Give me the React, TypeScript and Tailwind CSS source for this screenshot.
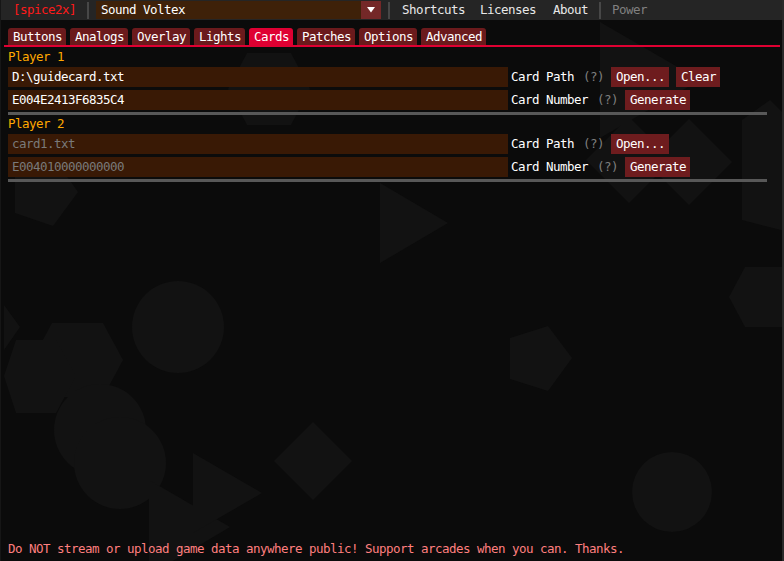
import React from "react";

const tabs = ["Buttons", "Analogs", "Overlay", "Lights", "Cards", "Patches", "Options", "Advanced"];
const tabW: Record<string, string> = {
  Buttons: "w-[58px]",
  Analogs: "w-[58px]",
  Overlay: "w-[58px]",
  Lights: "w-[51px]",
  Cards: "w-[44px]",
  Patches: "w-[58px]",
  Options: "w-[58px]",
  Advanced: "w-[65px]",
};

function Backdrop() {
  const c = "#121212";
  return (
    <svg className="absolute inset-0" width="784" height="561" viewBox="0 0 784 561">
      <polygon fill={c} points="228,89 247,53 291,53 310,89 291,125 247,125" />
      <polygon fill={c} points="600,22 700,80 600,138" />
      <polygon fill={c} points="629,117 672,160 629,203 586,160" />
      <polygon fill={c} points="689,119 732,162 689,205 646,162" />
      <polygon fill={c} points="742,120 770,100 800,130 800,235 742,220" />
      <polygon fill={c} points="15,213 53,226 78,192 55,160 15,172" />
      <polygon fill={c} points="380,183 448,223 380,263" />
      <circle fill={c} cx="178" cy="327" r="46" />
      <polygon fill={c} points="4,305 20,327 4,350" />
      <polygon fill={c} points="52,323 103,323 123,360 103,397 52,397 32,360" />
      <polygon fill={c} points="16,340 56,340 76,376 56,413 16,413 4,376" />
      <circle fill={c} cx="100" cy="430" r="46" />
      <circle fill={c} cx="120" cy="463" r="46" />
      <polygon fill={c} points="149,480 230,527 149,575" />
      <polygon fill={c} points="193,453 262,493 193,533" />
      <polygon fill={c} points="313,422 352,461 313,500 274,461" />
      <polygon fill={c} points="510,338 548,326 572,358 548,391 510,379" />
      <polygon fill={c} points="729,297 745,267 790,267 800,297 790,327 745,327" />
      <circle fill={c} cx="672" cy="492" r="40" />
    </svg>
  );
}

function Btn({ label, w }: { label: string; w: string }) {
  return (
    <div className={`${w} h-[20px] bg-[#6e1c1e] text-white flex items-center pl-[5px] whitespace-pre`}>
      {label}
    </div>
  );
}

function Row({
  value,
  hint,
  label,
  labelW,
  buttons,
}: {
  value: string;
  hint?: boolean;
  label: string;
  labelW: string;
  buttons: { label: string; w: string }[];
}) {
  return (
    <div className="flex items-center h-[20px]">
      <div
        className={`w-[500px] h-[20px] bg-[#391905] flex items-center pl-[4px] ${
          hint ? "text-[#7a7a7a]" : "text-white"
        }`}
      >
        {value}
      </div>
      <div className={`ml-[3px] ${labelW} text-white whitespace-pre`}>{label}</div>
      <div className="w-[28px] text-[#7f7f7f]">(?)</div>
      <div className="flex gap-[7px]">
        {buttons.map((b) => (
          <Btn key={b.label} label={b.label} w={b.w} />
        ))}
      </div>
    </div>
  );
}

function Player({ n, path, num, hint }: { n: number; path: string; num: string; hint?: boolean }) {
  return (
    <div className="flex flex-col">
      <div className="h-[16px] leading-[16px] text-[#ffa800]">Player {n}</div>
      <div className="mt-[2px] flex flex-col gap-[3px]">
        <Row
          value={path}
          hint={hint}
          label="Card Path"
          labelW="w-[72px]"
          buttons={
            hint
              ? [{ label: "Open...", w: "w-[58px]" }]
              : [
                  { label: "Open...", w: "w-[58px]" },
                  { label: "Clear", w: "w-[44px]" },
                ]
          }
        />
        <Row
          value={num}
          hint={hint}
          label="Card Number"
          labelW="w-[86px]"
          buttons={[{ label: "Generate", w: "w-[65px]" }]}
        />
      </div>
      <div className="mt-[2px] w-[759px] h-[3px] bg-[#585858]" />
    </div>
  );
}

export default function App() {
  return (
    <div className="w-[784px] h-[561px] bg-[#0b0b0b] relative overflow-hidden font-['DejaVu_Sans_Mono',monospace] text-[12.5px] tracking-[-0.525px] leading-[16px]">
      <Backdrop />
      <div className="relative h-full flex flex-col border-l border-l-[#161616] border-r-2 border-r-[#2a2a2a]">
        {/* menu bar */}
        <div className="h-[20px] bg-[#252525] flex items-center text-[#e8e8e8] shrink-0">
          <div className="ml-[12px] text-[#ff1a1a]">[spice2x]</div>
          <div className="ml-[11px] w-[2px] h-[17px] bg-[#474747]" />
          <div className="ml-[7px] w-[285px] h-[18px] bg-[#3e2109] flex items-center">
            <div className="flex-1 pl-[5px] text-white">Sound Voltex</div>
            <div className="w-[20px] h-[18px] bg-[#742828] flex items-center justify-center">
              <svg width="8" height="6" viewBox="0 0 8 6">
                <polygon points="0,0 8,0 4,5.5" fill="#ffffff" />
              </svg>
            </div>
          </div>
          <div className="ml-[7px] w-[2px] h-[17px] bg-[#474747]" />
          <div className="ml-[12px]">Shortcuts</div>
          <div className="ml-[15px]">Licenses</div>
          <div className="ml-[17px]">About</div>
          <div className="ml-[11px] w-[2px] h-[17px] bg-[#474747]" />
          <div className="ml-[11px] text-[#808080]">Power</div>
        </div>

        {/* body */}
        <div className="pl-[7px] pt-[8px] flex flex-col">
          <div className="flex gap-[4px] h-[17px]">
            {tabs.map((t) => (
              <div
                key={t}
                className={`${tabW[t]} h-[17px] rounded-t-[3px] flex items-center pl-[5px] text-white ${
                  t === "Cards" ? "bg-[#df0032]" : "bg-[#6b1a1c]"
                }`}
              >
                {t}
              </div>
            ))}
          </div>
          <div className="ml-[-4px] w-[776px] h-[2px] bg-[#df0032]" />
          <div className="mt-[2px] flex flex-col gap-[1px]">
            <Player n={1} path="D:\guidecard.txt" num="E004E2413F6835C4" />
            <Player n={2} path="card1.txt" num="E004010000000000" hint />
          </div>
        </div>

        <div className="mt-auto mb-[4px] pl-[7px] h-[16px] text-[#ff7f7f]">
          Do NOT stream or upload game data anywhere public! Support arcades when you can. Thanks.
        </div>
      </div>
    </div>
  );
}
